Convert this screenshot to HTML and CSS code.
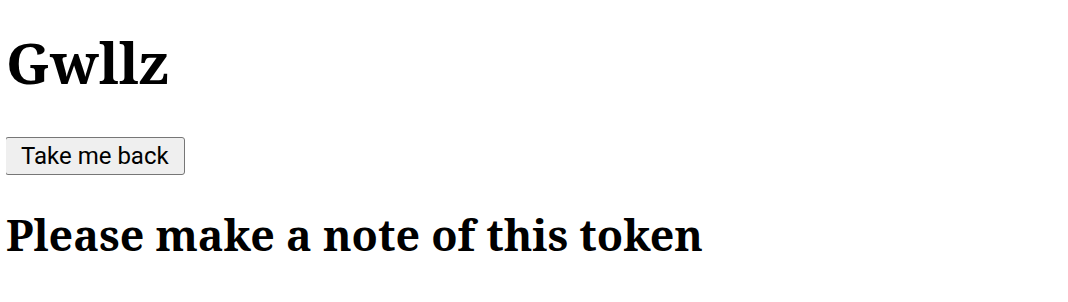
FILE: index.html
```html
<!DOCTYPE html>
<html lang="en">
<head>
    <meta charset="UTF-8">
    <title>Gwllz</title>
    <link rel="stylesheet" href="styles.css">
</head>
<body>
    <h1 class="title">Gwllz</h1>
    <button class="back-button">Take me back</button>
    <h2 class="notice">Please make a note of this token</h2>
</body>
</html>
```

FILE: styles.css
```css
body {
    margin: 0 6px;
    font-family: "Noto Serif", "DejaVu Serif", serif;
    color: #000000;
    background: #ffffff;
}

.title {
    font-size: 57px;
    font-weight: bold;
    margin: 25px 0 38px;
    line-height: 1.3;
}

.back-button {
    display: block;
    font-family: Roboto, sans-serif;
    font-size: 24px;
    line-height: 28px;
    padding: 4px 15px;
    background: #efefef;
    border: 1px solid #767676;
    border-radius: 3px;
    color: #000000;
    margin-left: -1px;
}

.notice {
    font-size: 43px;
    font-weight: bold;
    margin: 32px 0 0;
    line-height: 1.3;
}
```
